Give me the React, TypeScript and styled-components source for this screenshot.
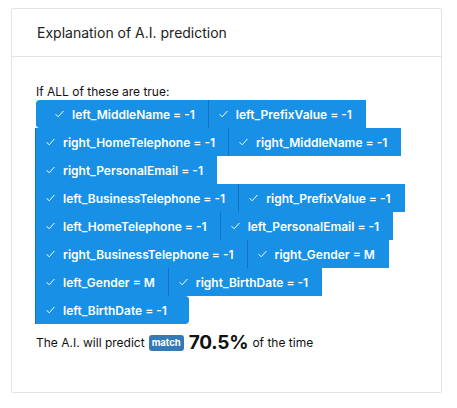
import React from 'react';
import styled, { createGlobalStyle } from 'styled-components';

const GlobalStyle = createGlobalStyle`
  body {
    margin: 0;
    background: #ffffff;
    font-family: Inter, "Liberation Sans", Arial, sans-serif;
    color: #212529;
  }
`;

const Page = styled.div`
  padding: 8px 15px 16px 11px;
`;

const Card = styled.section`
  border: 1px solid #e4e4e4;
  border-radius: 2px;
  background: #ffffff;
`;

const CardHeader = styled.header`
  display: flex;
  align-items: center;
  height: 47px;
  padding: 0 25px;
  border-bottom: 1px solid #e4e4e4;
  font-size: 14px;
  color: #222222;
`;

const CardBody = styled.div`
  padding: 27px 24px 38px 24px;
`;

const Lead = styled.p`
  margin: 0;
  font-size: 12px;
  line-height: 16px;
  color: #111111;
`;

const ChipGroup = styled.div`
  display: flex;
  flex-wrap: wrap;
`;

const Chip = styled.span<{ $first?: boolean; $last?: boolean }>`
  display: inline-flex;
  align-items: center;
  height: 28px;
  box-sizing: border-box;
  padding: 0 ${(p) => (p.$last ? '22px' : '14px')} 0 ${(p) => (p.$first ? '18px' : '10px')};
  margin-left: ${(p) => (p.$first ? '0' : '-1px')};
  background: #1790e6;
  border-left: 1px solid ${(p) => (p.$first ? '#1790e6' : '#1273c0')};
  color: #ffffff;
  font-size: 12px;
  font-weight: 600;
  white-space: nowrap;
  border-radius: ${(p) => (p.$first ? '4px 0 0 4px' : p.$last ? '0 4px 4px 0' : '0')};
`;

const Check = styled.svg`
  width: 9px;
  height: 8px;
  margin-right: 8px;
  flex-shrink: 0;
`;

const Summary = styled.p`
  display: flex;
  align-items: center;
  margin: 8px 0 0 0;
  font-size: 12px;
  line-height: 22px;
  color: #111111;
`;

const Badge = styled.span`
  display: inline-flex;
  align-items: center;
  height: 16px;
  padding: 0 3px;
  margin: 0 5px 0 4px;
  border-radius: 3px;
  background: #337ab7;
  color: #ffffff;
  font-size: 9.5px;
  font-weight: 700;
`;

const Percent = styled.strong`
  font-size: 19px;
  font-weight: 700;
  margin-right: 4px;
  letter-spacing: -0.2px;
`;

const conditions = [
  'left_MiddleName = -1',
  'left_PrefixValue = -1',
  'right_HomeTelephone = -1',
  'right_MiddleName = -1',
  'right_PersonalEmail = -1',
  'left_BusinessTelephone = -1',
  'right_PrefixValue = -1',
  'left_HomeTelephone = -1',
  'left_PersonalEmail = -1',
  'right_BusinessTelephone = -1',
  'right_Gender = M',
  'left_Gender = M',
  'right_BirthDate = -1',
  'left_BirthDate = -1',
];

const CheckIcon = () => (
  <Check viewBox="0 0 9 8">
    <polyline points="0.6,4.2 3.2,6.8 8.4,1" fill="none" stroke="#ffffff" strokeWidth="1" />
  </Check>
);

export default function App() {
  return (
    <Page>
      <GlobalStyle />
      <Card>
        <CardHeader>Explanation of A.I. prediction</CardHeader>
        <CardBody>
          <Lead>If ALL of these are true:</Lead>
          <ChipGroup>
            {conditions.map((c, i) => (
              <Chip key={c} $first={i === 0} $last={i === conditions.length - 1}>
                <CheckIcon />
                {c}
              </Chip>
            ))}
          </ChipGroup>
          <Summary>
            The A.I. will predict
            <Badge>match</Badge>
            <Percent>70.5%</Percent>
            of the time
          </Summary>
        </CardBody>
      </Card>
    </Page>
  );
}
